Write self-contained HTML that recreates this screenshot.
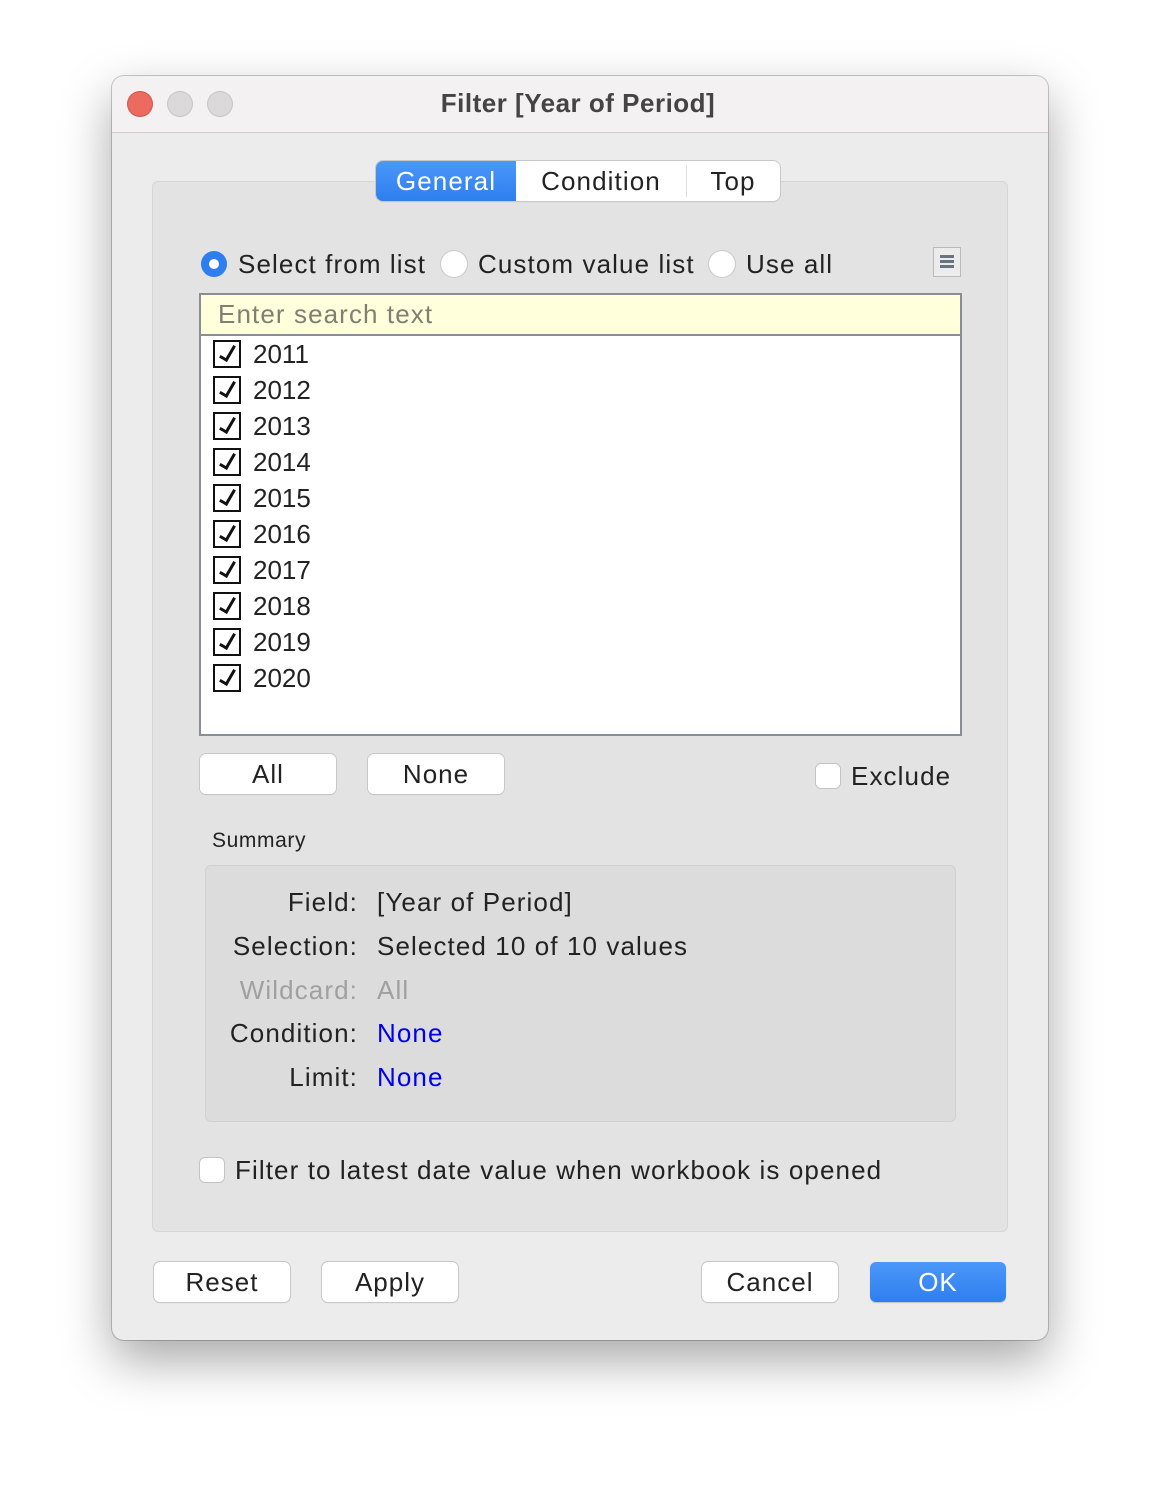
<!DOCTYPE html><html><head><style>
body{margin:0;width:1160px;height:1488px;background:#fff;font-family:"Liberation Sans",sans-serif;position:relative;overflow:hidden}
.a{position:absolute}
.win{left:112px;top:76px;width:936px;height:1264px;border-radius:12px;background:#ececec;box-shadow:0 20px 50px rgba(0,0,0,.35),0 0 0 1px rgba(0,0,0,.2);overflow:hidden}
.tb{left:0;top:0;width:936px;height:56px;background:#f4f1f2;border-bottom:1px solid #d0cdce}
.dot{width:24px;height:24px;border-radius:50%;top:16px}
.t{font-size:26px;color:#222;white-space:nowrap;letter-spacing:1.1px}
.btn{background:#fff;border-radius:6px;box-shadow:0 0 0 1px #c8c8c8,0 1px 1px rgba(0,0,0,.15);height:40px;width:136px;text-align:center;line-height:40px;font-size:26px;color:#222;letter-spacing:1px}
.cb{width:24px;height:24px;border:2px solid #111;background:#fff}
.cb::after{content:"";position:absolute;left:8px;top:1px;width:6px;height:15px;border:solid #111;border-width:0 3px 3px 0;transform:rotate(30deg)}
.ecb{width:24px;height:24px;border-radius:5px;background:#fff;box-shadow:0 0 0 1px #c4c4c4}
.rad{width:26px;height:26px;border-radius:50%;background:#fff;box-shadow:0 0 0 1px #c8c8c8}
</style></head><body>
<div class="a win">
<div class="a tb"></div>
<div class="a dot" style="left:16px;background:#ec6a5e;box-shadow:0 0 0 1px #d25349"></div>
<div class="a dot" style="left:56px;background:#dcd9da;box-shadow:0 0 0 1px #c8c5c6"></div>
<div class="a dot" style="left:96px;background:#dcd9da;box-shadow:0 0 0 1px #c8c5c6"></div>
<div class="a t" style="left:-2px;width:936px;text-align:center;top:12px;font-weight:bold;color:#444;letter-spacing:0.5px">Filter [Year of Period]</div>
</div>
<div class="a" style="left:152px;top:181px;width:854px;height:1049px;background:#e3e3e3;border:1px solid #d6d6d6;border-radius:6px"></div>
<div class="a" style="left:376px;top:161px;width:404px;height:40px;background:#fff;border-radius:7px;box-shadow:0 0 0 1px #c8c8c8,0 1px 1px rgba(0,0,0,.15);overflow:hidden">
<div class="a t" style="left:0;top:0;width:140px;height:40px;line-height:40px;text-align:center;background:linear-gradient(#4a98f8,#2f7ef0);color:#fff">General</div>
<div class="a t" style="left:140px;top:0;width:170px;line-height:40px;text-align:center">Condition</div>
<div class="a" style="left:310px;top:4px;width:1px;height:32px;background:#ddd"></div>
<div class="a t" style="left:310px;top:0;width:94px;line-height:40px;text-align:center">Top</div>
</div>
<div class="a rad" style="left:201px;top:251px;background:#2f7ef0;box-shadow:none"><div class="a" style="left:8px;top:8px;width:10px;height:10px;border-radius:50%;background:#fff"></div></div>
<div class="a t" style="left:238px;top:249px">Select from list</div>
<div class="a rad" style="left:441px;top:251px"></div>
<div class="a t" style="left:478px;top:249px">Custom value list</div>
<div class="a rad" style="left:709px;top:251px"></div>
<div class="a t" style="left:746px;top:249px">Use all</div>
<div class="a" style="left:933px;top:247px;width:26px;height:28px;border:1px solid #bbb;background:#ececec"><div class="a" style="left:6px;top:7px;width:14px;height:3px;background:#6a7380;box-shadow:0 5px 0 #6a7380,0 10px 0 #6a7380"></div></div>
<div class="a" style="left:199px;top:293px;width:759px;height:439px;border:2px solid #8a8d92;background:#fff"></div>
<div class="a" style="left:201px;top:295px;width:759px;height:39px;background:#ffffdc;border-bottom:2px solid #8a8d92"></div>
<div class="a t" style="left:218px;top:299px;color:#7f7f72">Enter search text</div>
<div id="rows"></div>
<script>
var h='';for(var i=0;i<10;i++){var y=340+i*36;h+='<div class="a cb" style="left:213px;top:'+y+'px"></div><div class="a t" style="left:253px;top:'+(y-1)+'px;letter-spacing:0">'+(2011+i)+'</div>';}document.getElementById('rows').innerHTML=h;
</script>
<div class="a btn" style="left:200px;top:754px">All</div>
<div class="a btn" style="left:368px;top:754px">None</div>
<div class="a ecb" style="left:816px;top:764px"></div>
<div class="a t" style="left:851px;top:761px">Exclude</div>
<div class="a t" style="left:212px;top:829px;font-size:21px;letter-spacing:0.6px">Summary</div>
<div class="a" style="left:205px;top:865px;width:749px;height:255px;background:#dcdcdc;border:1px solid #d0d0d0;border-radius:6px"></div>
<div class="a t" style="left:150px;width:208px;text-align:right;top:887px">Field:</div><div class="a t" style="left:377px;top:887px">[Year of Period]</div>
<div class="a t" style="left:150px;width:208px;text-align:right;top:931px">Selection:</div><div class="a t" style="left:377px;top:931px">Selected 10 of 10 values</div>
<div class="a t" style="left:150px;width:208px;text-align:right;top:975px;color:#a0a0a0">Wildcard:</div><div class="a t" style="left:377px;top:975px;color:#a0a0a0">All</div>
<div class="a t" style="left:150px;width:208px;text-align:right;top:1018px">Condition:</div><div class="a t" style="left:377px;top:1018px;color:#0000ee">None</div>
<div class="a t" style="left:150px;width:208px;text-align:right;top:1062px">Limit:</div><div class="a t" style="left:377px;top:1062px;color:#0000ee">None</div>
<div class="a ecb" style="left:200px;top:1158px"></div>
<div class="a t" style="left:235px;top:1155px">Filter to latest date value when workbook is opened</div>
<div class="a btn" style="left:154px;top:1262px">Reset</div>
<div class="a btn" style="left:322px;top:1262px">Apply</div>
<div class="a btn" style="left:702px;top:1262px">Cancel</div>
<div class="a btn" style="left:870px;top:1262px;background:linear-gradient(#4a98f8,#2f7ef0);color:#fff;box-shadow:0 1px 1px rgba(0,0,0,.2)">OK</div>
</body></html>
